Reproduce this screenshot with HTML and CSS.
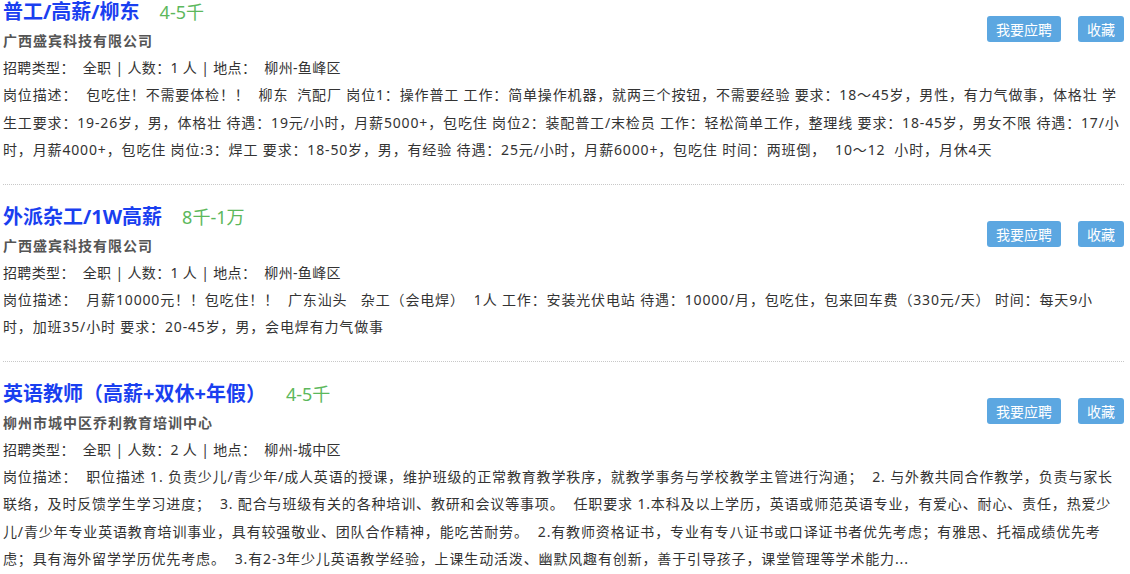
FILE: index.html
```html
<!DOCTYPE html>
<html lang="zh-CN">
<head>
    <meta charset="UTF-8">
    <meta name="viewport" content="width=device-width, initial-scale=1.0">
    <title>招聘信息</title>
    <link rel="stylesheet" href="styles.css">
</head>
<body>
    <div class="job-list">
        <div class="job-item">
            <div class="job-head">
                <div class="job-main">
                    <div class="job-title"><a href="#">普工/高薪/柳东</a><span class="salary">4-5千</span></div>
                    <div class="company">广西盛宾科技有限公司</div>
                </div>
                <div class="actions">
                    <button type="button">我要应聘</button>
                    <button type="button">收藏</button>
                </div>
            </div>
            <div class="meta">招聘类型：&nbsp; 全职 | 人数：1 人 | 地点：&nbsp; 柳州-鱼峰区</div>
            <div class="desc">岗位描述：&nbsp; 包吃住！不需要体检！！&nbsp; 柳东&nbsp; 汽配厂 岗位1：操作普工 工作：简单操作机器，就两三个按钮，不需要经验 要求：18～45岁，男性，有力气做事，体格壮 学生工要求：19-26岁，男，体格壮 待遇：19元/小时，月薪5000+，包吃住 岗位2：装配普工/末检员 工作：轻松简单工作，整理线 要求：18-45岁，男女不限 待遇：17/小时，月薪4000+，包吃住 岗位:3：焊工 要求：18-50岁，男，有经验 待遇：25元/小时，月薪6000+，包吃住 时间：两班倒，&nbsp; 10～12&nbsp; 小时，月休4天</div>
        </div>

        <div class="job-item">
            <div class="job-head">
                <div class="job-main">
                    <div class="job-title"><a href="#">外派杂工/1W高薪</a><span class="salary">8千-1万</span></div>
                    <div class="company">广西盛宾科技有限公司</div>
                </div>
                <div class="actions">
                    <button type="button">我要应聘</button>
                    <button type="button">收藏</button>
                </div>
            </div>
            <div class="meta">招聘类型：&nbsp; 全职 | 人数：1 人 | 地点：&nbsp; 柳州-鱼峰区</div>
            <div class="desc">岗位描述：&nbsp; 月薪10000元！！包吃住！！&nbsp; 广东汕头&nbsp;&nbsp; 杂工（会电焊）&nbsp; 1人 工作：安装光伏电站 待遇：10000/月，包吃住，包来回车费（330元/天） 时间：每天9小时，加班35/小时 要求：20-45岁，男，会电焊有力气做事</div>
        </div>

        <div class="job-item">
            <div class="job-head">
                <div class="job-main">
                    <div class="job-title"><a href="#">英语教师（高薪+双休+年假）</a><span class="salary">4-5千</span></div>
                    <div class="company">柳州市城中区乔利教育培训中心</div>
                </div>
                <div class="actions">
                    <button type="button">我要应聘</button>
                    <button type="button">收藏</button>
                </div>
            </div>
            <div class="meta">招聘类型：&nbsp; 全职 | 人数：2 人 | 地点：&nbsp; 柳州-城中区</div>
            <div class="desc">岗位描述：&nbsp; 职位描述 1. 负责少儿/青少年/成人英语的授课，维护班级的正常教育教学秩序，就教学事务与学校教学主管进行沟通；&nbsp; 2. 与外教共同合作教学，负责与家长联络，及时反馈学生学习进度；&nbsp; 3. 配合与班级有关的各种培训、教研和会议等事项。&nbsp; 任职要求 1.本科及以上学历，英语或师范英语专业，有爱心、耐心、责任，热爱少儿/青少年专业英语教育培训事业，具有较强敬业、团队合作精神，能吃苦耐劳。&nbsp; 2.有教师资格证书，专业有专八证书或口译证书者优先考虑；有雅思、托福成绩优先考虑；具有海外留学学历优先考虑。&nbsp; 3.有2-3年少儿英语教学经验，上课生动活泼、幽默风趣有创新，善于引导孩子，课堂管理等学术能力...</div>
        </div>
    </div>
</body>
</html>
```

FILE: styles.css
```css
body {
    margin: 0;
    padding: 0;
    background-color: #fff;
    font-family: "Noto Sans", "Noto Sans CJK SC", sans-serif;
    color: #333;
    font-size: 14px;
}
.job-list {
    margin-top: -20px;
    padding: 0 6px 0 3px;
}
.job-item {
    padding: 17px 0 20px;
    border-bottom: 1px dotted #c8c8c8;
}
.job-head {
    display: flex;
    justify-content: space-between;
    align-items: flex-start;
}
.job-title {
    height: 30px;
    line-height: 30px;
}
.job-title a {
    font-size: 20px;
    font-weight: bold;
    color: #1a3ff0;
    text-decoration: none;
}
.salary {
    margin-left: 20px;
    font-size: 18px;
    color: #5cb85c;
}
.company {
    line-height: 27px;
    font-size: 14px;
    font-weight: bold;
    color: #555;
    letter-spacing: 1px;
}
.meta {
    line-height: 27px;
    letter-spacing: 0.35px;
}
.desc {
    padding-right: 3px;
    line-height: 27.5px;
    letter-spacing: 0.85px;
}
.actions {
    display: flex;
    gap: 17px;
    margin-top: 19px;
}
.actions button {
    height: 26px;
    padding: 0 9px;
    font-family: inherit;
    font-size: 14px;
    color: #fff;
    background-color: #5ca7e1;
    border: none;
    border-radius: 3px;
    cursor: pointer;
}
.actions button:hover {
    background-color: #4a96d2;
}
```
